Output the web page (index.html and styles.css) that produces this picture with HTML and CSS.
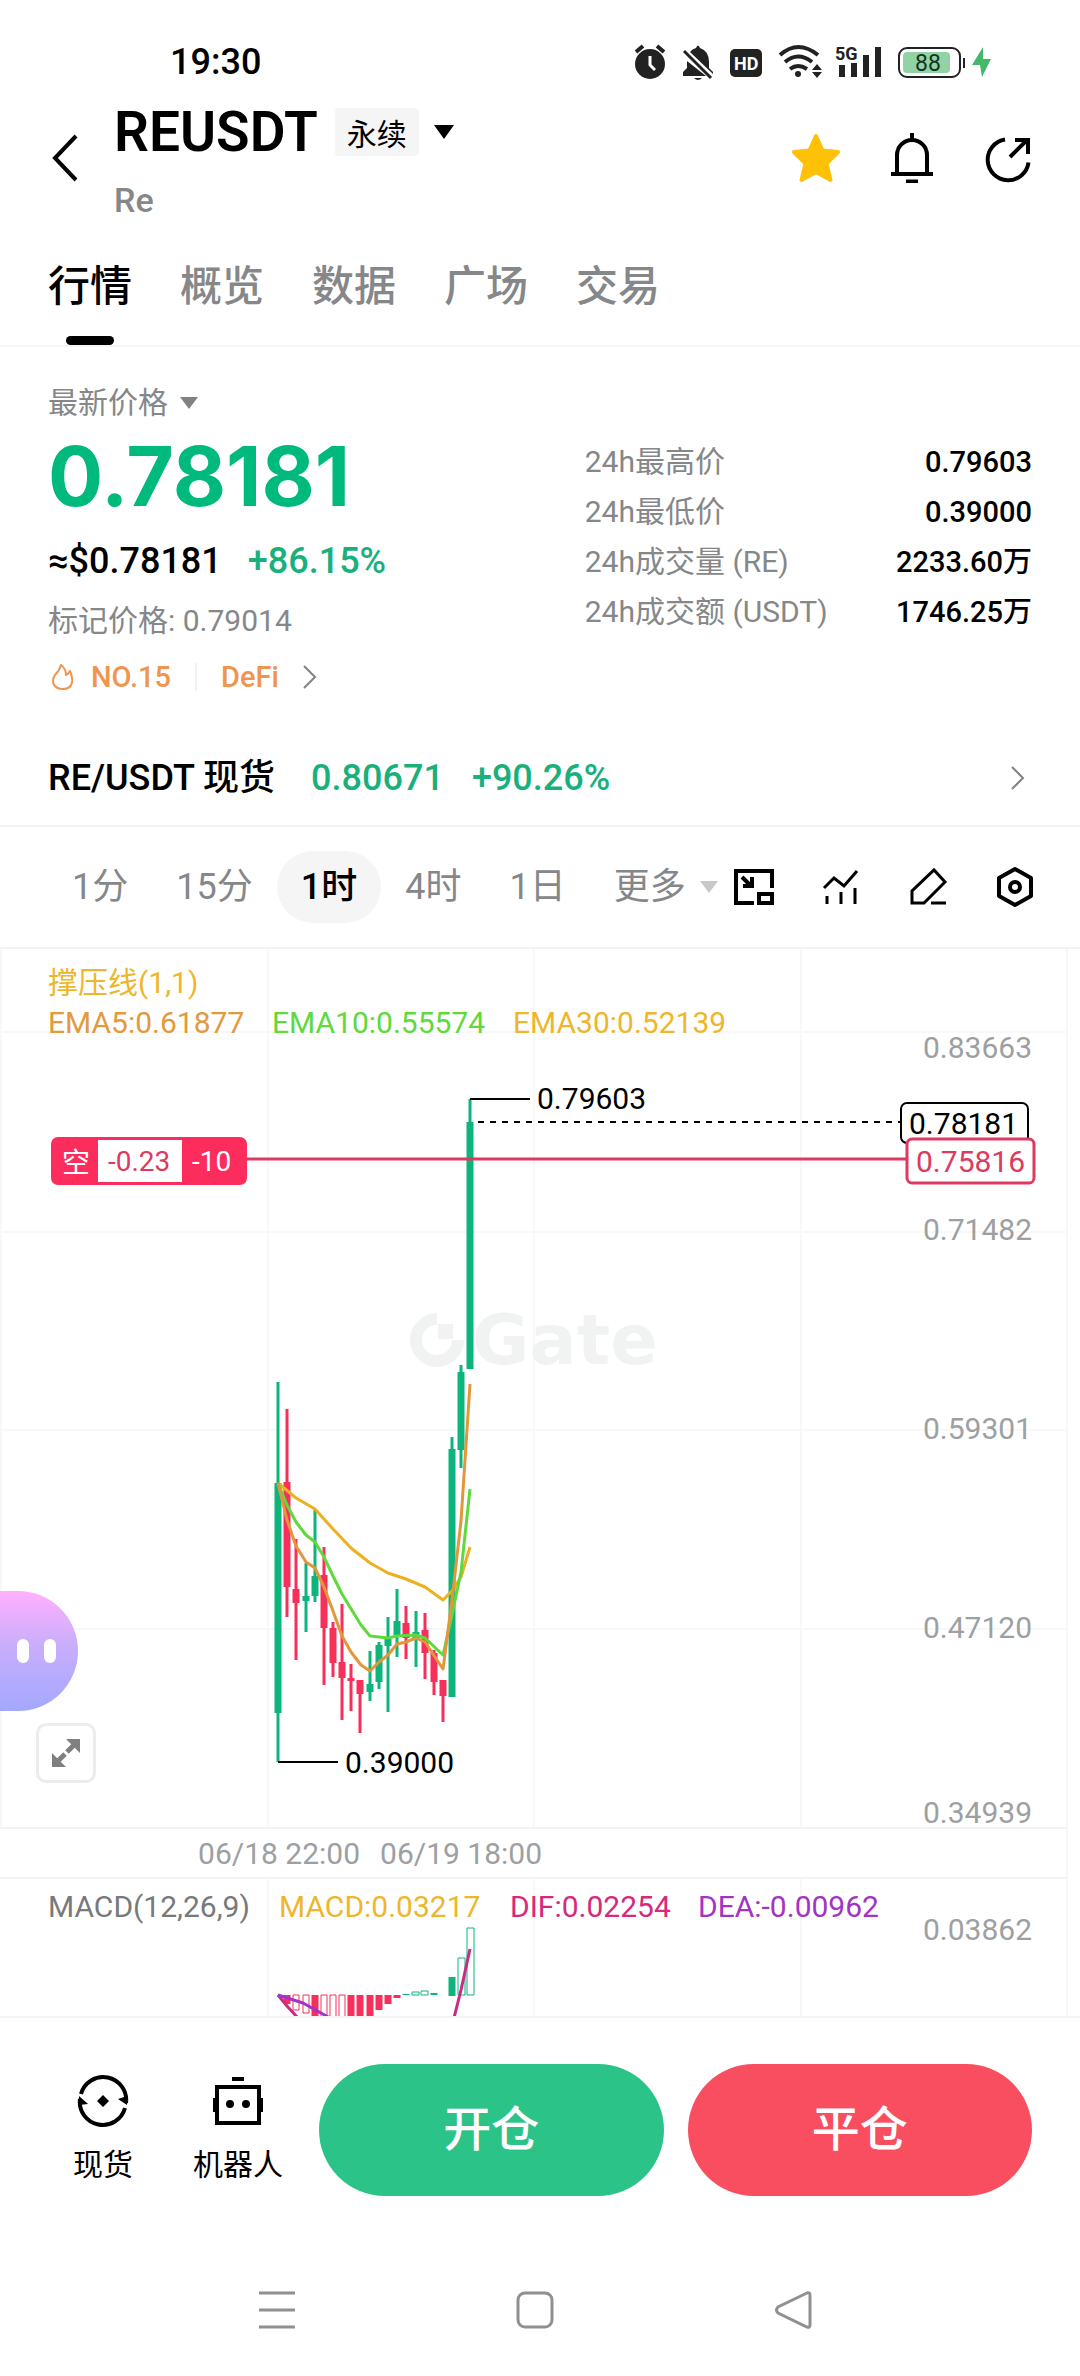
FILE: index.html
```html
<!DOCTYPE html>
<html lang="zh-CN">
<head>
    <meta charset="UTF-8">
    <meta name="viewport" content="width=device-width, initial-scale=1.0">
    <title>REUSDT 永续</title>
    <link rel="stylesheet" href="styles.css">
</head>
<body>
    <!-- Status bar -->
    <div class="status-bar">
        <span class="time">19:30</span>
        <svg class="status-icons" width="360" height="36" viewBox="632 43 360 36">
            <g fill="#222">
                <circle cx="650" cy="63" r="15"/>
                <path d="M636 51L643 45M657 45L664 51" stroke="#222" stroke-width="4"/>
                <path d="M650 55v9l5 5" fill="none" stroke="#fff" stroke-width="3"/>
                <path d="M683 75v-4l4-4V60l19 15zM690 51q2-3 6-4 2-5 4 0 9 3 9 14v6l4 4v2zM694 77h8q-4 4-8 0z"/>
                <path d="M684 50L711 77" stroke="#222" stroke-width="3"/>
                <rect x="730" y="48" width="32" height="28" rx="5"/>
                <g fill="none" stroke="#222" stroke-width="4">
                    <path d="M780 54q18-16 38 0M785 61q13-11 27 0M790 68q8-6 17 0"/>
                </g>
                <circle cx="798" cy="73" r="3"/>
                <path d="M812 69l5-6 5 6zM812 71l5 6 5-6z"/>
                <path d="M839 64h6v12h-6zM851 62h6v14h-6zM863 54h6v22h-6zM875 46h6v30h-6z"/>
                <rect x="963" y="57" width="2" height="10"/>
            </g>
            <rect x="899" y="47" width="61" height="29" rx="8" fill="none" stroke="#222" stroke-width="2"/>
            <rect x="903" y="51" width="47" height="21" rx="4" fill="#91d3a4"/>
            <path d="M983 46l-11 18h8l2 12 9-18h-8z" fill="#43b76a"/>
            <text x="734" y="69" class="s-label" fill="#fff">HD</text>
            <text x="835" y="59" class="s-label" fill="#222">5G</text>
            <text x="915" y="70" class="s-battery" fill="#12331d">88</text>
        </svg>
    </div>

    <!-- Header -->
    <header class="header">
        <button class="icon-btn back" aria-label="返回">
            <svg width="32" height="48" viewBox="0 0 32 48"><path d="M28 2L7 24 28 46" fill="none" stroke="#000" stroke-width="4"/></svg>
        </button>
        <div class="pair">
            <div class="pair-title">
                <h1>REUSDT</h1>
                <span class="badge">永续</span>
                <svg width="22" height="14" viewBox="0 0 22 14"><path d="M1 0h20L11 14z"/></svg>
            </div>
            <p class="pair-sub">Re</p>
        </div>
        <div class="header-actions">
            <button class="icon-btn" aria-label="收藏">
                <svg width="48" height="50" viewBox="0 0 48 50"><path d="M24 3l6.500 14.500L46 19 34.500 30.500 38.500 47 24 39 9.500 47 13.500 30.500 2 19l15.500-1.500z" fill="#ffc107" stroke="#ffc107" stroke-width="4" stroke-linejoin="round"/></svg>
            </button>
            <button class="icon-btn" aria-label="提醒">
                <svg width="48" height="50" viewBox="0 0 48 50"><path d="M24 0v6M9 41V22a15 15 0 0 1 30 0v19M3 41h42M18 48.500h12" fill="none" stroke="#000" stroke-width="4"/></svg>
            </button>
            <button class="icon-btn" aria-label="分享">
                <svg width="48" height="50" viewBox="0 0 48 50"><path d="M21 6.500a20.500 20.500 0 1 0 23.500 23M26 24L43 7M31 7h13v14" fill="none" stroke="#000" stroke-width="4"/></svg>
            </button>
        </div>
    </header>

    <nav class="tabs">
        <a href="#" class="active">行情</a>
        <a href="#">概览</a>
        <a href="#">数据</a>
        <a href="#">广场</a>
        <a href="#">交易</a>
    </nav>

    <!-- Price -->
    <section class="summary">
        <div class="price-col">
            <button class="price-type">最新价格
                <svg width="18" height="12" viewBox="0 0 18 12"><path d="M0 0h18L9 12z" fill="#808284"/></svg>
            </button>
            <div class="price">0.78181</div>
            <div class="price-usd"><span>≈$0.78181</span><span class="up">+86.15%</span></div>
            <div class="mark">标记价格: 0.79014</div>
            <a href="#" class="rank">
                <svg width="24" height="28" viewBox="0 0 24 28"><path d="M10 2c4 3 5 7 5 10 2-1 3-2 4-4 4 9 3 18-7 18S0 18 4 12c3-3 5-6 6-10z" fill="none" stroke="#f0954f" stroke-width="2" stroke-linejoin="round"/></svg>
                <span>NO.15</span>
                <i class="sep"></i>
                <span>DeFi</span>
                <svg width="14" height="24" viewBox="0 0 14 24"><path d="M1 1l11 11L1 23" fill="none" stroke="#808284" stroke-width="2"/></svg>
            </a>
        </div>
        <dl class="stats">
            <div><dt>24h最高价</dt><dd>0.79603</dd></div>
            <div><dt>24h最低价</dt><dd>0.39000</dd></div>
            <div><dt>24h成交量 (RE)</dt><dd>2233.60万</dd></div>
            <div><dt>24h成交额 (USDT)</dt><dd>1746.25万</dd></div>
        </dl>
    </section>

    <a href="#" class="spot">
        <span class="spot-pair">RE/USDT 现货</span>
        <span class="up">0.80671</span>
        <span class="up">+90.26%</span>
        <svg width="30" height="24" viewBox="0 0 30 24"><path d="M10 1l11 11L10 23" fill="none" stroke="#808284" stroke-width="2"/></svg>
    </a>

    <!-- Chart toolbar -->
    <div class="toolbar">
        <div class="intervals">
            <button>1分</button>
            <button>15分</button>
            <button class="active">1时</button>
            <button>4时</button>
            <button>1日</button>
            <button class="more">更多
                <svg width="18" height="12" viewBox="0 0 18 12"><path d="M0 0h18L9 12z" fill="#c8c8c8"/></svg>
            </button>
        </div>
        <div class="tools">
            <button class="icon-btn" aria-label="小窗">
                <svg width="42" height="42" viewBox="0 0 42 42" fill="none" stroke="#000" stroke-width="4"><path d="M39 22V5H3v32h18M26 28h13v9H26zM9 11l9 9M19 11v9H10"/></svg>
            </button>
            <button class="icon-btn" aria-label="指标">
                <svg width="42" height="42" viewBox="0 0 42 42" fill="none" stroke="#000" stroke-width="3"><path d="M4 22l10-10 10 8L37 5M7 30v8M21 26v12M35 22v16"/></svg>
            </button>
            <button class="icon-btn" aria-label="画线">
                <svg width="42" height="42" viewBox="0 0 42 42" fill="none" stroke="#000" stroke-width="3"><path d="M5 37V25L27 4l11 12-21 21zM24 37h15"/></svg>
            </button>
            <button class="icon-btn" aria-label="设置">
                <svg width="42" height="42" viewBox="0 0 42 42" fill="none" stroke="#000" stroke-width="4"><path d="M21 3l16 9v18l-16 9-16-9V12z" stroke-linejoin="round"/><circle cx="21" cy="21" r="5"/></svg>
            </button>
        </div>
    </div>

    <!-- Chart -->
    <div class="chart">
        <svg class="chart-svg" viewBox="0 949 1080 1067">
            <path class="grid" d="M268 949V1828M534 949V1828M801 949V1828M1067 949V2016M1 949V1828M0 1032H1067M0 1232H1067M0 1430H1067M0 1629H1067M268 1879V2016M534 1879V2016M801 1879V2016"/>
            <path class="rule" d="M0 1828H1067M0 1878H1067"/>

            <!-- watermark -->
            <g class="watermark">
                <path d="M437 1319a21 21 0 1 0 21 21" fill="none" stroke="#f1f3f3" stroke-width="12"/>
                <rect x="438" y="1324" width="15" height="15"/>
                <text x="472" y="1364">Gate</text>
            </g>

            <g class="legend">
                <text x="48" y="993" fill="#eeb62b">撑压线(1,1)</text>
                <text x="48" y="1033" fill="#e29a3c">EMA5:0.61877</text>
                <text x="272" y="1033" fill="#5fd93c">EMA10:0.55574</text>
                <text x="513" y="1033" fill="#eeb62b">EMA30:0.52139</text>
            </g>

            <g class="axis">
                <text x="1032" y="1058">0.83663</text>
                <text x="1032" y="1240">0.71482</text>
                <text x="1032" y="1439">0.59301</text>
                <text x="1032" y="1638">0.47120</text>
                <text x="1032" y="1823">0.34939</text>
                <text x="1032" y="1940">0.03862</text>
                <text x="360" y="1864">06/18 22:00</text>
                <text x="542" y="1864">06/19 18:00</text>
            </g>

            <!-- candles: wicks, then bodies -->
            <path class="wick green" d="M278 1382V1762M306 1563V1632M315 1509V1602M370 1651V1701M379 1642V1689M388 1617V1712M397 1589V1657M416 1611V1667M452 1437V1697M461 1365V1468M470 1099V1369"/>
            <path class="wick red" d="M287 1409V1617M296 1539V1660M324 1547V1685M333 1622V1677M342 1604V1720M351 1664V1711M360 1680V1733M406 1606V1659M425 1613V1679M434 1650V1695M443 1680V1722"/>
            <path class="candle green" d="M278 1483V1713M306 1596V1601M315 1576V1596M370 1684V1692M379 1645V1682M388 1639V1646M397 1621V1635M416 1632V1638M452 1449V1697M461 1372V1450M470 1122V1369"/>
            <path class="candle red" d="M287 1482V1587M296 1589V1603M324 1575V1628M333 1628V1663M342 1662V1678M351 1678V1681M360 1680V1694M406 1623V1638M425 1630V1653M434 1653V1682M443 1680V1696"/>

            <!-- EMA lines -->
            <path class="line" stroke="#eeb021" d="M278 1483L296 1498 315 1509 333 1529 351 1548 370 1563 388 1573 406 1579 425 1587 443 1600 452 1591 461 1577 470 1547"/>
            <path class="line" stroke="#5fd93c" d="M278 1483L287 1505 296 1522 306 1535 315 1542 324 1557 333 1576 342 1594 361 1625 370 1636 388 1638 397 1636 416 1635 425 1638 443 1655 452 1615 461 1572 470 1489"/>
            <path class="line" stroke="#e3963a" d="M278 1483L287 1520 296 1546 306 1562 315 1568 324 1587 333 1611 342 1636 351 1652 361 1665 370 1671 379 1662 388 1655 397 1644 406 1642 416 1638 425 1642 443 1669 452 1600 461 1521 470 1384"/>

            <!-- high / low marks -->
            <path d="M470 1099H530M278 1762H338" stroke="#000" stroke-width="2"/>
            <text x="537" y="1109">0.79603</text>
            <text x="345" y="1773">0.39000</text>

            <!-- last price -->
            <path d="M478 1122H900" stroke="#000" stroke-width="2" stroke-dasharray="6 6"/>
            <rect x="901" y="1103" width="127" height="40" rx="6" fill="#fff" stroke="#000" stroke-width="2"/>
            <text x="909" y="1134">0.78181</text>

            <!-- short position -->
            <path d="M247 1159H906" stroke="#dc3a60" stroke-width="3"/>
            <rect x="907" y="1139" width="127" height="44" rx="5" fill="#fff" stroke="#dc3a60" stroke-width="3"/>
            <text x="916" y="1172" fill="#dc3a60">0.75816</text>
            <rect x="51" y="1137" width="196" height="48" rx="7" fill="#fc2d5d"/>
            <rect x="98" y="1140" width="84" height="42" fill="#fff"/>
            <g class="position">
                <text x="62" y="1173" fill="#fff">空</text>
                <text x="108" y="1171" fill="#dc3a60">-0.23</text>
                <text x="192" y="1171" fill="#fff">-10</text>
            </g>

            <!-- MACD -->
            <g class="legend">
                <text x="48" y="1917" fill="#77797b">MACD(12,26,9)</text>
                <text x="279" y="1917" fill="#eeb62b">MACD:0.03217</text>
                <text x="510" y="1917" fill="#d6297c">DIF:0.02254</text>
                <text x="698" y="1917" fill="#a233c4">DEA:-0.00962</text>
            </g>
            <path class="candle red" d="M287 1995V2004M315 1995V2016M351 1995V2016M360 1995V2016M370 1995V2016M379 1995V2010M388 1995V2004M397 1995V1998"/>
            <path class="hollow red" d="M293 1995h6v15h-6zM303 1995h6v18h-6zM321 1995h6v23h-6zM330 1995h6v23h-6zM339 1995h6v23h-6z"/>
            <path class="candle green" d="M406 1994V1995M434 1993V1995M452 1977V1996"/>
            <path class="hollow green" d="M412 1992h7v3h-7zM421 1991h7v4h-7zM458 1958h7v37h-7zM467 1928h7v67h-7z"/>
            <path class="line" stroke="#c92a86" d="M278 1995L287 2006 298 2018M454 2018L461 1990 470 1949"/>
            <path class="line" stroke="#a233c4" d="M278 1995L303 2003 330 2018"/>
        </svg>

        <button class="assistant" aria-label="助手"><i></i><i></i></button>
        <button class="expand" aria-label="全屏">
            <svg width="28" height="28" viewBox="0 0 28 28" fill="#808080"><path d="M14 0h14v14zM0 14v14h14z"/><path d="M15 13l7-7M6 22l7-7" stroke="#808080" stroke-width="5"/></svg>
        </button>
    </div>

    <!-- Bottom actions -->
    <footer class="actions">
        <a href="#" class="action-link">
            <svg width="52" height="52" viewBox="0 0 52 52"><path d="M4 19a23 23 0 0 1 45 9M48 33A23 23 0 0 1 3 24" fill="none" stroke="#000" stroke-width="4"/><path d="M41 24l9-3v9zM2 21l9 8-9 1zM26 20l6 6-6 6-6-6z"/></svg>
            现货
        </a>
        <a href="#" class="action-link">
            <svg width="52" height="52" viewBox="0 0 52 52"><path d="M5 12h42v36H5zM20 4h12M3 23v14M49 23v14" fill="none" stroke="#000" stroke-width="4"/><circle cx="18" cy="29" r="4"/><circle cx="34" cy="29" r="4"/></svg>
            机器人
        </a>
        <div class="trade">
            <button class="open">开仓</button>
            <button class="close">平仓</button>
        </div>
    </footer>

    <nav class="system-nav">
        <button class="icon-btn" aria-label="最近任务"><svg width="38" height="38" viewBox="0 0 38 38"><path d="M1 2h36M1 19h36M1 36h36"/></svg></button>
        <button class="icon-btn" aria-label="主页"><svg width="38" height="38" viewBox="0 0 38 38"><rect x="2" y="2" width="34" height="34" rx="7"/></svg></button>
        <button class="icon-btn" aria-label="后退"><svg width="38" height="38" viewBox="0 0 38 38"><path d="M33 2L4 16q-3 3 0 6l29 14q3 1 3-2V4q0-3-3-2z"/></svg></button>
    </nav>
</body>
</html>
```
FILE: styles.css
```css
* {
    margin: 0;
    padding: 0;
    box-sizing: border-box;
}

body {
    background: #fff;
    color: #000;
    font-family: Roboto, "Noto Sans CJK SC", sans-serif;
    font-size: 30px;
    line-height: 40px;
}

button {
    background: none;
    border: none;
    font: inherit;
    color: inherit;
    cursor: pointer;
}

a {
    color: inherit;
    text-decoration: none;
}

svg {
    display: block;
    flex-shrink: 0;
}

.up {
    color: #19b07b;
}

/* Status bar */
.status-bar {
    display: flex;
    justify-content: space-between;
    align-items: center;
    padding: 44px 88px 28px 170px;
}

.time {
    font-size: 36px;
    font-weight: 500;
    line-height: 36px;
}

.s-label {
    font-size: 18px;
    font-weight: 700;
}

.s-battery {
    font-size: 23px;
}

/* Header */
.header {
    display: flex;
    align-items: center;
    padding: 0 48px;
}

.back,
.header-actions {
    margin-bottom: 12px;
}

.pair {
    flex: 1;
    margin-left: 34px;
}

.pair-title {
    display: flex;
    align-items: center;
    gap: 14px;
}

.pair-title h1 {
    font-size: 55px;
    font-weight: 600;
    line-height: 48px;
    margin-right: 3px;
}

.badge {
    background: #f5f5f5;
    border-radius: 4px;
    padding: 6px 12px 0;
    font-size: 30px;
    line-height: 42px;
}

.pair-sub {
    margin-top: 24px;
    font-size: 34px;
    font-weight: 500;
    color: #858789;
}

.header-actions {
    display: flex;
    gap: 48px;
}

/* Tabs */
.tabs {
    display: flex;
    gap: 48px;
    padding: 0 48px;
    border-bottom: 2px solid #f5f5f5;
    font-size: 42px;
    font-weight: 500;
    line-height: 60px;
    color: #858789;
}

.tabs a {
    padding: 37px 0 28px;
}

.tabs .active {
    position: relative;
    color: #000;
}

.tabs .active::after {
    content: "";
    position: absolute;
    left: 18px;
    bottom: 0;
    width: 48px;
    height: 9px;
    border-radius: 5px;
    background: #000;
}

/* Price summary */
.summary {
    display: grid;
    grid-template-columns: 6fr 5fr;
    padding: 36px 48px 0;
}

.price-type {
    display: flex;
    align-items: center;
    gap: 12px;
    color: #858789;
}

.price {
    margin: 12px 0 20px;
    font-family: Inter, sans-serif;
    font-size: 82px;
    font-weight: 700;
    line-height: 84px;
    color: #00b97c;
}

.price-usd {
    display: flex;
    gap: 26px;
    font-size: 36px;
    font-weight: 500;
    line-height: 44px;
}

.mark {
    margin: 18px 0 16px;
    color: #858789;
}

.rank {
    display: flex;
    align-items: center;
    gap: 24px;
    color: #f0954f;
    font-size: 29px;
    font-weight: 500;
}

.rank svg:first-child {
    margin: 0 -8px 0 3px;
}

.sep {
    width: 2px;
    height: 28px;
    background: #f2f2f2;
}

.stats {
    padding-top: 54px;
}

.stats div {
    display: flex;
    justify-content: space-between;
    line-height: 50px;
}

.stats dt {
    color: #858789;
}

.stats dd {
    font-size: 29px;
    font-weight: 500;
}

.spot {
    display: flex;
    align-items: center;
    gap: 28px;
    padding: 56px 48px 22px;
    border-bottom: 2px solid #f3f3f3;
    font-size: 36px;
    font-weight: 500;
    line-height: 50px;
}

.spot-pair {
    margin-right: 8px;
}

.spot svg {
    margin-left: auto;
}

/* Chart toolbar */
.toolbar {
    display: flex;
    justify-content: space-between;
    align-items: center;
    padding: 24px 44px 24px 48px;
    border-bottom: 2px solid #f3f3f3;
}

.intervals {
    display: flex;
    font-size: 36px;
    line-height: 72px;
    color: #858789;
    white-space: nowrap;
}

.intervals button {
    padding: 0 24px;
}

.intervals .active {
    background: #f5f5f5;
    border-radius: 36px;
    color: #000;
    font-weight: 500;
}

.intervals .more {
    display: flex;
    align-items: center;
    gap: 14px;
    padding-right: 0;
}

.tools {
    display: flex;
    gap: 45px;
}

/* Chart */
.chart {
    position: relative;
    border-bottom: 2px solid #f3f3f3;
}

.chart-svg {
    width: 100%;
    font-size: 30px;
}

.grid,
.rule {
    fill: none;
    stroke: #f8f8f8;
    stroke-width: 2;
}

.rule {
    stroke: #f3f3f3;
}

.watermark {
    fill: #f1f3f3;
    font-family: "DejaVu Sans", sans-serif;
    font-size: 70px;
    font-weight: 700;
}

.axis {
    fill: #9da0a2;
    text-anchor: end;
}

.position {
    font-size: 28px;
}

.green {
    stroke: #0db57c;
}

.red {
    stroke: #f72f5b;
}

.wick {
    stroke-width: 3;
}

.candle {
    stroke-width: 7;
}

.hollow {
    fill: #fff;
    stroke-width: 1;
}

.line {
    fill: none;
    stroke-width: 3;
    stroke-linejoin: round;
}

.assistant {
    position: absolute;
    left: 0;
    top: 642px;
    width: 78px;
    height: 120px;
    padding-right: 22px;
    border-radius: 0 60px 60px 0;
    background: linear-gradient(#ffb0ff, #c9aefb 45%, #a3a8ff);
    display: flex;
    justify-content: flex-end;
    align-items: center;
    gap: 15px;
}

.assistant i {
    width: 12px;
    height: 24px;
    border-radius: 6px;
    background: #fff;
}

.expand {
    position: absolute;
    left: 36px;
    top: 774px;
    width: 60px;
    height: 60px;
    border: 3px solid #ececec;
    border-radius: 10px;
    background: #fff;
    display: flex;
    justify-content: center;
    align-items: center;
}

/* Bottom actions */
.actions {
    display: flex;
    align-items: center;
    gap: 36px;
    padding: 46px 48px 95px 73px;
}

.action-link {
    display: flex;
    flex-direction: column;
    align-items: center;
    gap: 18px;
}

.action-link + .action-link {
    margin-left: 24px;
}

.trade {
    flex: 1;
    display: flex;
    gap: 24px;
}

.trade button {
    flex: 1;
    border-radius: 66px;
    color: #fff;
    font-size: 48px;
    font-weight: 500;
    line-height: 132px;
}

.open {
    background: #2cc388;
}

.close {
    background: #f94d60;
}

.system-nav {
    display: grid;
    grid-template-columns: repeat(3, 1fr);
    justify-items: center;
    padding: 0 158px 44px 148px;
}

.system-nav svg {
    fill: none;
    stroke: #909090;
    stroke-width: 3;
}
```
